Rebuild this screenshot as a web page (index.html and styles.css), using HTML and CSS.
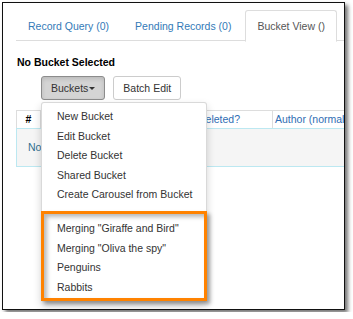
FILE: index.html
```html
<!DOCTYPE html>
<html lang="en">
<head>
    <meta charset="UTF-8">
    <title>Bucket View</title>
    <link rel="stylesheet" href="styles.css">
</head>
<body>
    <div class="shot">
        <!-- Tabs -->
        <ul class="tabs">
            <li><a>Record Query (0)</a></li>
            <li><a>Pending Records (0)</a></li>
            <li class="active"><a>Bucket View ()</a></li>
        </ul>

        <div class="pane">
            <div class="bucket-title">No Bucket Selected</div>

            <div class="toolbar">
                <div class="btn-group">
                    <button class="btn btn-open">Buckets<span class="caret"></span></button>
                    <!-- Open dropdown -->
                    <ul class="menu">
                        <li>New Bucket</li>
                        <li>Edit Bucket</li>
                        <li>Delete Bucket</li>
                        <li>Shared Bucket</li>
                        <li>Create Carousel from Bucket</li>
                        <li class="divider"></li>
                        <li>Merging "Giraffe and Bird"</li>
                        <li>Merging "Oliva the spy"</li>
                        <li>Penguins</li>
                        <li>Rabbits</li>
                        <div class="callout"></div>
                    </ul>
                </div>
                <button class="btn">Batch Edit</button>
            </div>

            <div class="grid">
                <div class="grid-head">
                    <div class="col col-num">#</div>
                    <div class="col col-title"><a>Title</a></div>
                    <div class="col col-del"><a>Deleted?</a></div>
                    <div class="col col-author"><a>Author (normalized)</a></div>
                </div>
                <div class="grid-empty">No Items To Display</div>
            </div>
        </div>
    </div>
</body>
</html>
```

FILE: styles.css
```css
* {
    margin: 0;
    padding: 0;
    box-sizing: border-box;
}

body {
    font-family: "Liberation Sans", Arial, sans-serif;
    font-size: 10.5px;
    line-height: 15px;
    color: #333;
    background: #fff;
}

.shot {
    margin: 2px;
    width: 343px;
    height: 308px;
    border: 1px solid #111;
    box-shadow: 3px 3px 4px rgba(0, 0, 0, 0.55);
    background: #fff;
    padding: 7px 0 0 13px;
    overflow: hidden;
}

/* tabs */
.tabs {
    list-style: none;
    display: flex;
    border-bottom: 1px solid #ddd;
    height: 31px;
}

.tabs li {
    margin-right: 2px;
    margin-bottom: -1px;
}

.tabs a {
    display: block;
    padding: 8px 11px 7px;
    border: 1px solid transparent;
    border-radius: 3px 3px 0 0;
    color: #337ab7;
    white-space: nowrap;
}

.tabs .active a {
    color: #555;
    background: #fff;
    border-color: #ddd;
    border-bottom-color: #fff;
}

/* pane */
.pane {
    padding-left: 1px;
}

.bucket-title {
    margin-top: 14px;
    font-weight: bold;
    color: #000;
}

.toolbar {
    display: flex;
    gap: 8px;
    margin: 6px 0 0 24px;
}

.btn-group {
    position: relative;
}

.btn {
    font-family: inherit;
    font-size: 10.5px;
    line-height: 14px;
    padding: 4px 9px;
    border: 1px solid #ccc;
    border-radius: 3px;
    background: #fff;
    color: #333;
    display: flex;
    align-items: center;
}

.btn-open {
    background: #d4d4d4;
    border-color: #8c8c8c;
    box-shadow: inset 0 2px 4px rgba(0, 0, 0, 0.125);
}

.caret {
    display: inline-block;
    margin-left: 1px;
    margin-top: 1px;
    border-top: 3px solid #333;
    border-left: 3px solid transparent;
    border-right: 3px solid transparent;
}

/* dropdown */
.menu {
    position: absolute;
    top: 100%;
    left: 0;
    margin-top: 2px;
    width: 166px;
    list-style: none;
    background: #fff;
    border: 1px solid rgba(0, 0, 0, 0.15);
    border-radius: 3px;
    box-shadow: 0 4px 9px rgba(0, 0, 0, 0.175);
    padding: 3.75px 0;
    z-index: 10;
}

.menu li {
    padding: 2.25px 15px;
    line-height: 15px;
    color: #333;
    white-space: nowrap;
}

.menu .divider {
    height: 1px;
    padding: 0;
    margin: 6.75px 0;
    background: #e5e5e5;
}

/* orange annotation around the bucket list */
.callout {
    position: absolute;
    left: -1px;
    top: 108px;
    width: 166px;
    height: 90px;
    border: 3px solid #ff8200;
    box-shadow: 3px 3px 4px rgba(0, 0, 0, 0.35), inset 3px 3px 4px rgba(0, 0, 0, 0.28);
}

/* grid */
.grid {
    margin: 10px 0 0 -1px;
    width: 460px;
}

.grid-head {
    display: flex;
    border-top: 1px solid #ddd;
    border-left: 1px solid #ddd;
}

.col {
    padding: 1px 2px;
    border-right: 1px solid #ddd;
    white-space: nowrap;
    overflow: hidden;
}

.col a {
    color: #2f6db3;
}

.col-num {
    width: 24px;
    text-align: center;
    font-weight: bold;
    color: #000;
}

.col-title {
    width: 155px;
}

.col-del {
    width: 77px;
    text-align: right;
    padding-right: 32px;
}

.col-author {
    width: 200px;
}

.grid-empty {
    border: 1px solid #bce8f1;
    background: #f5f5f5;
    color: #31708f;
    padding: 11px 11px;
    height: 39px;
}
```
